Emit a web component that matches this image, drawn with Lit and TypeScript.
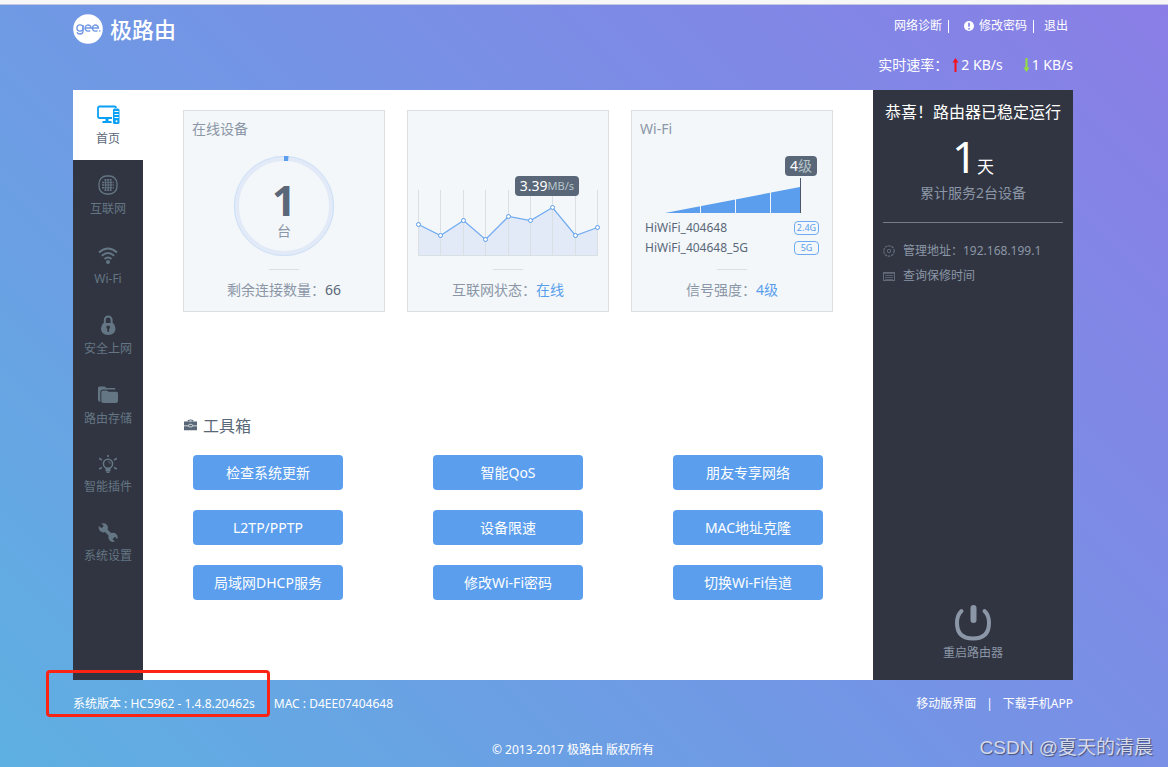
import { LitElement, html, css, svg } from "lit";
import { customElement } from "lit/decorators.js";
import { classMap } from "lit/directives/class-map.js";

const homeIcon = html`<svg width="23" height="20" viewBox="0 0 23 20" fill="none" aria-hidden="true">
  <rect x="1" y="1.500" width="18" height="11.500" rx="1.500" stroke="#0aa0f3" stroke-width="1.800" />
  <path d="M8.500 13.500h3v2.500h2.500q1.500.8.500 2H5.500q-1-1.200.5-2h2.500z" fill="#0aa0f3" />
  <rect x="15" y="3" width="8" height="17" fill="#fff" />
  <rect x="16" y="3.500" width="6.500" height="15.500" rx="1.500" fill="#0aa0f3" />
  <path d="M17.500 6.500h4M17.500 9.500h4M17.500 12.500h4" stroke="#fff" stroke-width="1.200" />
  <circle cx="19.500" cy="16.200" r="1" fill="#fff" />
</svg>`;

const globeIcon = html`<svg width="20" height="20" viewBox="0 0 20 20" fill="none" stroke="currentColor" aria-hidden="true">
  <rect x="1" y="1" width="18" height="18" rx="7.500" stroke-width="1.300" />
  <path d="M6.500 4.800h7M4 7.500h12M4 10h12M4 12.700h12M6.500 15.300h7" stroke-width="1.600" stroke-dasharray="2 .8" />
  <path d="M7.300 4v12M10 4v12M12.700 4v12" stroke-width=".9" />
</svg>`;

const wifiIcon = html`<svg width="20" height="20" viewBox="0 0 20 20" fill="none" stroke="currentColor" aria-hidden="true">
  <path d="M1 7.500Q10-.3 19 7.500M3.800 10.800Q10 5.200 16.200 10.800M6.500 14Q10 10.800 13.500 14" stroke-width="1.900" />
  <circle cx="10" cy="17" r="2" fill="currentColor" stroke="none" />
</svg>`;

const lockIcon = html`<svg width="20" height="20" viewBox="0 0 20 20" aria-hidden="true">
  <path d="M6.800 9V4.800a3.400 3.400 0 0 1 6.800 0V9" fill="none" stroke="currentColor" stroke-width="2" />
  <path fill-rule="evenodd" fill="currentColor" d="M5.500 8h9.400q2.600 2 2.600 5.500 0 6.500-7.300 6.500T3 13.500Q3 10 5.500 8zM8.300 12.300q0 1 1 1.500v3h1.800v-3q1-.5 1-1.500a1.900 1.900 0 0 0-3.800 0z" />
</svg>`;

const folderIcon = html`<svg width="20" height="20" viewBox="0 0 20 20" fill="currentColor" aria-hidden="true">
  <path d="M0 3q0-1.500 1.500-1.500h5L8.500 3H16q1.500 0 1.500 1.400H4.500Q2.300 4.500 2.300 7v10Q0 16.500 0 14.500z" />
  <path d="M3.300 7q0-1.500 1.500-1.500h4l2 1.300h7.700Q20 6.800 20 8.300V16q0 2-2 2H5.300q-2 0-2-2z" />
</svg>`;

const bulbIcon = html`<svg width="20" height="18" viewBox="0 0 20 18" fill="none" stroke="currentColor" aria-hidden="true">
  <circle cx="10" cy="8.800" r="4.600" stroke-width="1.600" />
  <path d="M8 13l.3 1.500h3.400L12 13" stroke-width="1.200" />
  <path d="M7.500 15.400h5M8.500 17.300h3" stroke-width="1.600" />
  <path d="M10.300 6.500q1.600.3 1.900 2.200" stroke-width="1" />
  <path d="M10 0v2M1.200 3.300l2.700 1.800M18.800 3.300l-2.700 1.800M1.200 14l2.700-1.600M18.800 14l-2.700-1.600" stroke-width="1.700" />
</svg>`;

const wrenchIcon = html`<svg width="20" height="19" viewBox="0 0 20 19" fill="none" aria-hidden="true">
  <path d="M6 5.500l8.500 8.500" stroke="currentColor" stroke-width="3.600" />
  <circle cx="5.300" cy="4.800" r="4.600" fill="currentColor" />
  <circle cx="15" cy="14.300" r="4.600" fill="currentColor" />
  <path d="M-.5-1l5.100 5.100M20.800 20.100L15.700 15" stroke="#313541" stroke-width="3.400" />
</svg>`;

const navItems = [
  { label: "首页", icon: homeIcon, active: true },
  { label: "互联网", icon: globeIcon },
  { label: "Wi-Fi", icon: wifiIcon },
  { label: "安全上网", icon: lockIcon },
  { label: "路由存储", icon: folderIcon },
  { label: "智能插件", icon: bulbIcon },
  { label: "系统设置", icon: wrenchIcon },
];

const tools = [
  "检查系统更新", "智能QoS", "朋友专享网络",
  "L2TP/PPTP", "设备限速", "MAC地址克隆",
  "局域网DHCP服务", "修改Wi-Fi密码", "切换Wi-Fi信道",
];

const traffic = [
  [10.5, 85.5], [32.5, 96.500], [55.5, 81.5], [77.5, 100.500], [100.5, 77.5],
  [122.5, 81.5], [144.5, 68.5], [167.5, 96.500], [189.5, 88.5],
];

@customElement("app-root")
export class AppRoot extends LitElement {
  static styles = css`
    :host {
      display: block;
      font: 12px/18px "Noto Sans", "Noto Sans CJK SC", sans-serif;
      color: #fff;
    }
    * { box-sizing: border-box; }
    a { color: inherit; text-decoration: none; }
    button { font: inherit; color: inherit; border: 0; padding: 0; background: none; cursor: pointer; }
    svg { display: block; flex: none; }
    h1, h2, p, ul { margin: 0; padding: 0; font-weight: 400; list-style: none; }

    .page {
      position: relative;
      min-height: 100vh;
      padding-right: 22px;
      border-top: 4px solid #f7f7f7;
      background: linear-gradient(45deg, #5eb0e2, #7494e5 50%, #8a7ee6);
      box-shadow: inset 0 1px #c3c9e2;
    }
    .wrap { max-width: 1000px; margin: 0 auto; }

    .header { display: flex; justify-content: space-between; height: 86px; padding-top: 10px; }
    .brand { display: flex; align-items: center; gap: 7px; height: 30px; font-size: 22px; line-height: 28px; font-weight: 500; }
    .account { display: flex; flex-direction: column; align-items: flex-end; gap: 20px; padding-top: 3px; }
    .links { display: flex; align-items: center; padding-right: 5px; }
    .divider { width: 1px; height: 13px; margin: 0 10px 0 6px; background: #fff; }
    .links .badge { margin: 0 5px; }
    .rates { display: flex; align-items: center; font-size: 14px; line-height: 20px; }
    .rate { display: flex; align-items: center; gap: 2px; margin-left: 4px; }
    .rate + .rate { margin-left: 20px; }

    .panel { display: flex; min-height: 590px; background: #fff; }
    .nav { flex: none; width: 70px; background: #313541; }
    .nav-item {
      display: flex; flex-direction: column; align-items: center; gap: 5px;
      padding: 15px 0 12px; color: #647684;
    }
    .nav-item.active { background: #fff; color: #5a6778; }

    .content { flex: 1; min-width: 0; padding: 20px 40px; }
    .cards { display: grid; grid-template-columns: repeat(3, 1fr); gap: 22px; }
    .card {
      position: relative;
      display: flex; flex-direction: column; align-items: center;
      padding: 8px 0 11px; border: 1px solid #dcdfe2;
      background: #f3f7fa; color: #8b96a6; font-size: 14px; line-height: 20px;
    }
    .card-title { align-self: stretch; height: 20px; padding: 0 8px; font-size: 14px; }
    .card-body { position: relative; width: 200px; height: 119px; }
    .status::before { content: ""; display: block; width: 30px; height: 1px; margin: 11px auto 10px; background: #dadfe4; }
    .value { color: #5a6778; }
    .online { color: #5a9eeb; }

    .ring {
      display: grid; place-items: center; margin: 17px auto 0; width: 100px; height: 100px;
    }
    .ring > * { grid-area: 1 / 1; }
    .count { display: flex; flex-direction: column; align-items: center; padding-top: 6px; line-height: 18px; color: #8b96a6; }
    .count strong { font-size: 42px; line-height: 44px; color: #5a6778; }

    .tip {
      position: absolute; display: flex; align-items: center; justify-content: center;
      height: 20px; padding: 0 5px; border-radius: 4px;
      background: #5a6778; color: #fff; white-space: nowrap;
    }
    .tip span { color: #b5c5cb; }
    .tip-speed { right: 29px; top: 37px; }
    .tip-speed span { font-size: 11px; }
    .tip-level { right: 15px; top: 17px; }

    .networks { padding: 0 13px; font-size: 12px; color: #5a6778; }
    .network { display: flex; align-items: center; justify-content: space-between; }
    .band {
      width: 25px; height: 14px; border: 1px solid #6fabf0; border-radius: 4px;
      font-size: 9px; line-height: 12px; text-align: center; color: #5a9eed;
    }

    .tools-title { display: flex; align-items: center; gap: 5px; margin-top: 102px; font-size: 16px; line-height: 24px; color: #5a6778; }
    .tools { display: grid; grid-template-columns: repeat(3, 150px); justify-content: space-between; gap: 20px 0; padding: 17px 10px 0; }
    .tool { height: 35px; border-radius: 4px; background: #5a9eed; color: #fff; font-size: 14px; }

    .side {
      display: flex; flex-direction: column; flex: none; width: 200px;
      padding: 10px 10px 18px; background: #313541; text-align: center;
    }
    .side-title { font-size: 16px; line-height: 24px; white-space: nowrap; }
    .days { display: flex; align-items: baseline; justify-content: center; font-size: 17px; line-height: 64px; height: 59px; }
    .days span { font-size: 44px; }
    .served { padding-bottom: 19px; border-bottom: 1px solid #747c88; font-size: 14px; line-height: 20px; color: #8b96a6; }
    .facts { display: flex; flex-direction: column; gap: 7px; padding-top: 19px; color: #8b96a6; }
    .fact { display: flex; align-items: center; gap: 8px; }
    .restart { display: flex; flex-direction: column; align-items: center; gap: 3px; margin: auto auto 0; color: #8b96a6; }

    .footer { display: flex; justify-content: space-between; padding-top: 15px; }
    .info { display: flex; gap: 19px; position: relative; }
    .mark { position: absolute; left: -27px; top: -25px; width: 224px; height: 47px; border: 3px solid #fb2414; border-radius: 4px; }
    .apps { display: flex; gap: 10px; }
    .copyright { padding-top: 28px; text-align: center; }
    .watermark {
      position: absolute; right: 15px; bottom: 6px;
      font: 19px/26px "Liberation Sans", "Noto Sans CJK SC", sans-serif;
      color: #d5daeb; text-shadow: 1px 1px 1px #46507a;
    }
  `;

  render() {
    return html`
      <div class="page">
        <div class="wrap">
          ${this.renderHeader()}
          <div class="panel">
            <nav class="nav">
              ${navItems.map((n) => html`
                <a href="#" class=${classMap({ "nav-item": true, active: !!n.active })}>${n.icon}<span>${n.label}</span></a>`)}
            </nav>
            <main class="content">
              <div class="cards">
                ${this.renderDevices()} ${this.renderTraffic()} ${this.renderWifi()}
              </div>
              <h2 class="tools-title">
                <svg width="15" height="16" viewBox="0 0 15 16" aria-hidden="true">
                  <path d="M5 3.500Q5 2 7.500 2T10 3.500" fill="none" stroke="#5a6778" stroke-width="1.200" />
                  <path d="M1 3.500h13v4H1zM1 8.300h13v4H1z" fill="#5a6778" />
                  <rect x="5.500" y="6.300" width="4" height="2.600" rx="1.300" fill="#5a6778" stroke="#fff" stroke-width=".7" />
                </svg>
                工具箱
              </h2>
              <div class="tools">${tools.map((t) => html`<button class="tool">${t}</button>`)}</div>
            </main>
            ${this.renderSide()}
          </div>
          <footer>
            <div class="footer">
              <div class="info">
                <span>系统版本 : HC5962 - 1.4.8.20462s</span><span>MAC : D4EE07404648</span>
                <div class="mark"></div>
              </div>
              <div class="apps"><a href="#">移动版界面</a><span>|</span><a href="#">下载手机APP</a></div>
            </div>
            <p class="copyright">© 2013-2017 极路由 版权所有</p>
          </footer>
        </div>
        <div class="watermark">CSDN @夏天的清晨</div>
      </div>
    `;
  }

  renderHeader() {
    return html`
      <header class="header">
        <h1 class="brand">
          <svg width="30" height="30" viewBox="0 0 30 30" fill="none" aria-hidden="true">
            <circle cx="15" cy="15" r="14.800" fill="#fff" />
            <g stroke="#7197e4" stroke-width="1.300">
              <circle cx="7" cy="14" r="3.100" />
              <path d="M10.100 11v6q0 3-3.100 3-2.400 0-3-1.800" />
              <path d="M12 14h6.200a3.100 3.100 0 1 0-1 2.400M19.300 14h6.200a3.100 3.100 0 1 0-1 2.400" />
            </g>
            <circle cx="26.800" cy="17" r=".8" fill="#7197e4" />
          </svg>
          极路由
        </h1>
        <div class="account">
          <div class="links">
            <a href="#">网络诊断</a><span class="divider"></span>
            <svg class="badge" width="10" height="10" viewBox="0 0 10 10" aria-hidden="true">
              <circle cx="5" cy="5" r="5" fill="#fff" /><path d="M5 1.800v4M5 7v1.500" stroke="#8284e6" stroke-width="1.700" />
            </svg>
            <a href="#">修改密码</a><span class="divider"></span>
            <a href="#">退出</a>
          </div>
          <div class="rates">
            <span>实时速率：</span>
            <span class="rate">
              <svg width="7" height="14" viewBox="0 0 7 14" aria-hidden="true"><path d="M3.500 0L6.500 4.500h-2V14h-2V4.500h-2z" fill="#f5101c" /></svg>
              2 KB/s
            </span>
            <span class="rate">
              <svg width="7" height="14" viewBox="0 0 7 14" aria-hidden="true"><path d="M3.500 14L6.500 9.500h-2V0h-2v9.500h-2z" fill="#93e03c" /></svg>
              1 KB/s
            </span>
          </div>
        </div>
      </header>
    `;
  }

  renderDevices() {
    return html`
      <section class="card">
        <h2 class="card-title">在线设备</h2>
        <div class="card-body">
          <div class="ring">
            <svg width="100" height="100" viewBox="0 0 100 100" fill="none" aria-hidden="true">
              <circle cx="50" cy="50" r="47.500" stroke="#e2eaf8" stroke-width="5" />
              <circle cx="50" cy="50" r="49.700" stroke="#c3dbf7" stroke-width=".7" />
              <path d="M50 0h4.500l-.4 5H50z" fill="#5a9eed" />
            </svg>
            <div class="count"><strong>1</strong><span>台</span></div>
          </div>
        </div>
        <div class="status">剩余连接数量：<span class="value">66</span></div>
      </section>
    `;
  }

  renderTraffic() {
    const line = traffic.map((p) => p.join(",")).join(" ");
    return html`
      <section class="card">
        <div class="card-title"></div>
        <div class="card-body">
          <svg width="200" height="119" viewBox="0 0 200 119" fill="none" aria-hidden="true">
            <polygon points="10.5,116.5 ${line} 189.5,116.5" fill="#e2eaf8" />
            ${traffic.map(([x]) => svg`<path d="M${x} 51V117" stroke="#dadfe4" />`)}
            <path d="M10 116.500H190" stroke="#dadfe4" />
            <polyline points=${line} stroke="#6fabf0" stroke-width="1.200" />
            ${traffic.map(([x, y]) => svg`<circle cx=${x} cy=${y} r="2" fill="#fff" stroke="#5a9eed" />`)}
          </svg>
          <div class="tip tip-speed">3.39<span>MB/s</span></div>
        </div>
        <div class="status">互联网状态：<span class="online">在线</span></div>
      </section>
    `;
  }

  renderWifi() {
    return html`
      <section class="card">
        <h2 class="card-title">Wi-Fi</h2>
        <div class="card-body">
          <svg width="200" height="79" viewBox="0 0 200 79" aria-hidden="true">
            <path d="M33 74L168 48V74z" fill="#5a9eed" />
            <path d="M68.500 60V74M103.500 50V74M138.500 45V74" stroke="#f3f7fa" />
            <path d="M168.500 39V74" stroke="#4c586a" />
          </svg>
          <div class="tip tip-level">4<span>级</span></div>
          <ul class="networks">
            <li class="network">HiWiFi_404648<span class="band">2.4G</span></li>
            <li class="network">HiWiFi_404648_5G<span class="band">5G</span></li>
          </ul>
        </div>
        <div class="status">信号强度：<span class="online">4级</span></div>
      </section>
    `;
  }

  renderSide() {
    return html`
      <aside class="side">
        <h2 class="side-title">恭喜！路由器已稳定运行</h2>
        <p class="days"><span>1</span>天</p>
        <p class="served">累计服务2台设备</p>
        <div class="facts">
          <div class="fact">
            <svg width="12" height="12" viewBox="0 0 12 12" fill="none" stroke="#626a77" aria-hidden="true">
              <circle cx="6" cy="6" r="5.200" stroke-dasharray="2.500 .8" stroke-width="1.200" /><circle cx="6" cy="6" r="1.700" />
            </svg>
            <span>管理地址：192.168.199.1</span>
          </div>
          <a class="fact" href="#">
            <svg width="12" height="12" viewBox="0 0 12 12" fill="none" stroke="#626a77" aria-hidden="true">
              <rect x=".5" y="2.500" width="11" height="8" /><path d="M0 3.500h12M2 5.500h8M2 7.500h8M2 9.500h8" stroke-width=".8" />
            </svg>
            <span>查询保修时间</span>
          </a>
        </div>
        <button class="restart">
          <svg width="38" height="37" viewBox="0 0 38 37" fill="none" stroke="#8b96a6" stroke-linecap="round" aria-hidden="true">
            <path d="M7.500 7Q3 11 3 19 3 34.500 19 34.500T35 19Q35 11 30.500 7" stroke-width="4" />
            <path d="M19.500 4V16" stroke-width="6" />
          </svg>
          重启路由器
        </button>
      </aside>
    `;
  }
}
